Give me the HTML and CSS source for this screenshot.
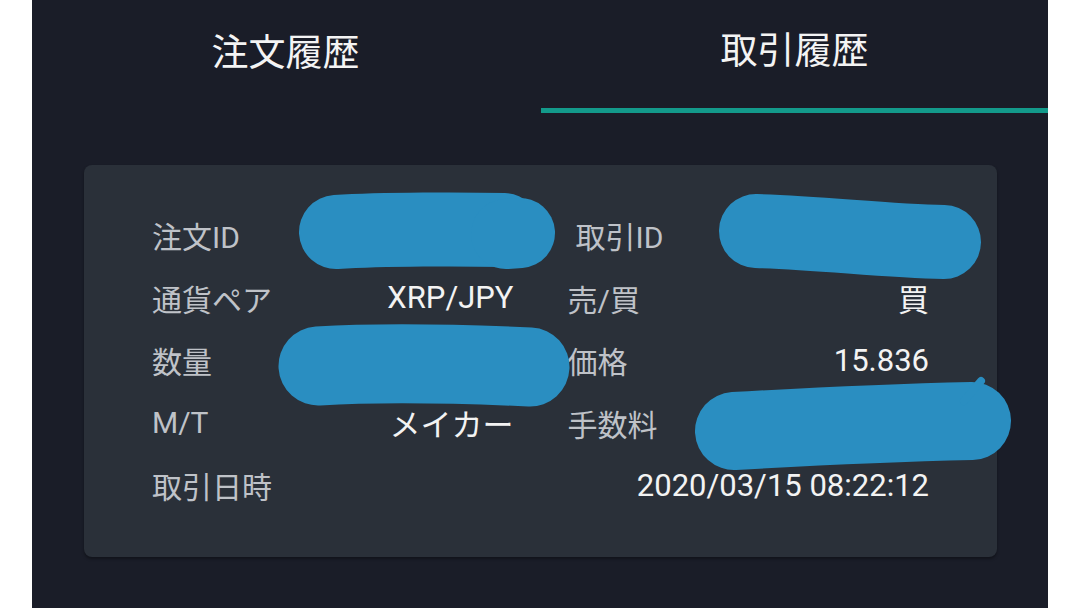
FILE: index.html
```html
<!DOCTYPE html>
<html lang="ja">
<head>
<meta charset="utf-8">
<title>取引履歴</title>
<link rel="stylesheet" href="styles.css">
</head>
<body>
<div class="screen">
  <div class="tabs">
    <div class="tab">注文履歴</div>
    <div class="tab active">取引履歴</div>
  </div>
  <div class="card">
    <div class="grid">
      <div class="cell"><span class="label">注文ID</span><span class="value"></span></div>
      <div class="cell"><span class="label shift">取引ID</span><span class="value"></span></div>
      <div class="cell"><span class="label">通貨ペア</span><span class="value">XRP/JPY</span></div>
      <div class="cell"><span class="label">売/買</span><span class="value">買</span></div>
      <div class="cell"><span class="label">数量</span><span class="value"></span></div>
      <div class="cell"><span class="label">価格</span><span class="value">15.836</span></div>
      <div class="cell"><span class="label">M/T</span><span class="value">メイカー</span></div>
      <div class="cell"><span class="label">手数料</span><span class="value"></span></div>
      <div class="cell"><span class="label">取引日時</span><span class="value"></span></div>
      <div class="cell"><span class="label"></span><span class="value">2020/03/15 08:22:12</span></div>
    </div>
    <svg class="redact" width="913" height="392" viewBox="0 0 913 392">
      <g stroke="#2a8ec1" stroke-linecap="round" fill="none">
        <path d="M252 67 C300 64 380 64 420 65" stroke-width="74"/>
        <path d="M422 69 L436 68" stroke-width="70"/>
        <path d="M672 66 C740 68 800 76 860 77" stroke-width="74"/>
        <path d="M234 201 C300 197 380 199 446 202" stroke-width="79"/>
        <path d="M650 266 C720 262 800 258 888 256" stroke-width="78"/>
        <path d="M880 236 L897 216" stroke-width="8"/>
      </g>
    </svg>
  </div>
</div>
</body>
</html>
```

FILE: styles.css
```css
html, body {
  margin: 0;
  padding: 0;
  background: #ffffff;
}
body {
  font-family: Roboto, "Noto Sans CJK JP", sans-serif;
  width: 1080px;
  height: 608px;
  overflow: hidden;
}
.screen {
  margin: 0 32px;
  width: 1016px;
  height: 608px;
  background: #1a1d28;
  overflow: hidden;
}
.tabs {
  display: flex;
  height: 113px;
}
.tab {
  flex: 1;
  display: flex;
  align-items: center;
  justify-content: center;
  color: #f4f4f4;
  font-size: 37px;
  padding-bottom: 14px;
  box-sizing: border-box;
}
.tab.active {
  border-bottom: 5px solid #139a8b;
  margin-left: 2px;
  padding-bottom: 12px;
}
.card {
  position: relative;
  margin: 52px 51px 0 52px;
  height: 392px;
  box-sizing: border-box;
  background: #2a3039;
  border-radius: 8px;
  padding: 39px 68px 0 68px;
  box-shadow: 0 2px 3px rgba(0,0,0,0.35);
}
.grid {
  display: grid;
  grid-template-columns: 1fr 1fr;
  column-gap: 54px;
  grid-auto-rows: 62.5px;
}
.cell {
  display: flex;
  justify-content: space-between;
  align-items: center;
  font-size: 30px;
}
.label {
  color: #bfc2c8;
}
.label.shift {
  padding-left: 8px;
}
.value {
  color: #f3f3f3;
  font-size: 31px;
}
.redact {
  position: absolute;
  left: 0;
  top: 0;
  overflow: visible;
}
```
